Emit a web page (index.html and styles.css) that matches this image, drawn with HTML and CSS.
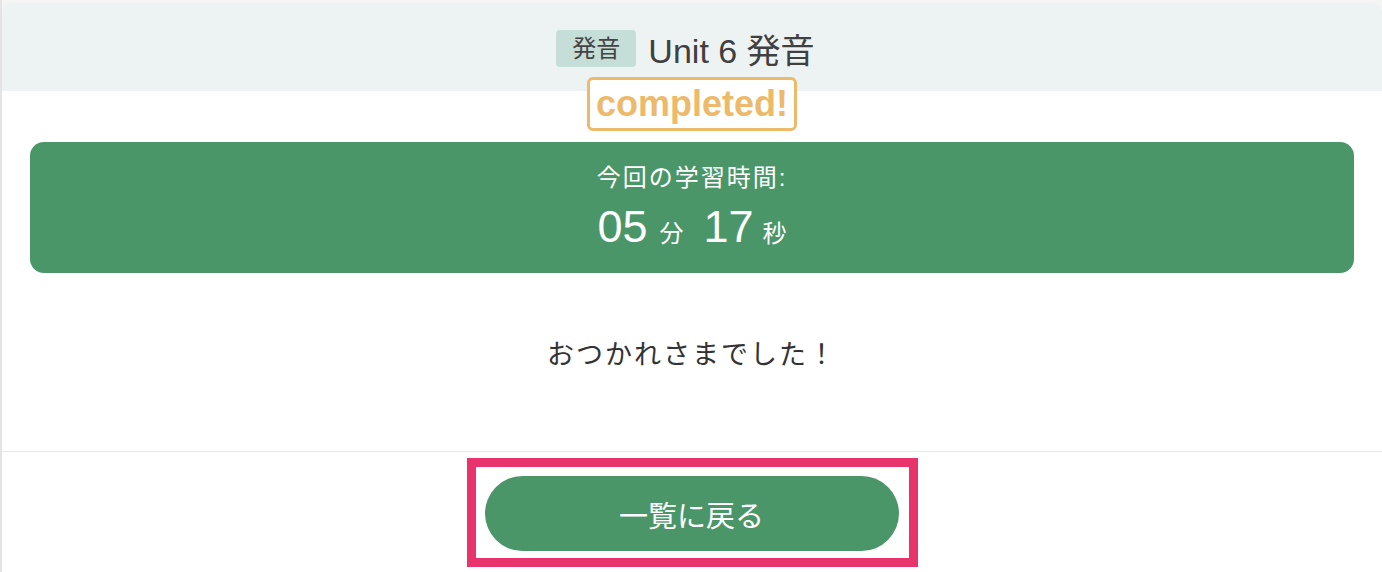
FILE: index.html
```html
<!DOCTYPE html>
<html lang="ja">
<head>
    <meta charset="UTF-8">
    <meta name="viewport" content="width=device-width, initial-scale=1.0">
    <title>Unit 6 発音 - completed</title>
    <link rel="stylesheet" href="styles.css">
</head>
<body>
    <div class="page">
        <div class="card">
            <div class="card-header">
                <span class="tag">発音</span>
                <h1 class="title">Unit 6 発音</h1>
            </div>

            <div class="card-body">
                <div class="completed">completed!</div>

                <div class="study-time">
                    <p class="study-label">今回の学習時間:</p>
                    <p class="study-value"><span class="num">05</span><span class="unit">分</span><span class="num">17</span><span class="unit">秒</span></p>
                </div>

                <p class="message">おつかれさまでした！</p>
            </div>

            <div class="card-footer">
                <div class="highlight">
                    <button type="button" class="back-button">一覧に戻る</button>
                </div>
            </div>
        </div>
    </div>
</body>
</html>
```

FILE: styles.css
```css
html, body {
    margin: 0;
    padding: 0;
    height: 100%;
}

body {
    background-color: #f4f4f4;
    font-family: "Liberation Sans", "Noto Sans CJK JP", sans-serif;
    color: #444;
}

.page {
    height: 100%;
    padding-top: 3px;
    border-left: 2px solid #e4e4e4;
    box-sizing: border-box;
    overflow: hidden;
}

.card {
    background-color: #fff;
    border-radius: 8px 8px 0 0;
    min-height: 569px;
}

.card-header {
    height: 88px;
    background-color: #edf3f3;
    border-radius: 8px 8px 0 0;
    display: flex;
    align-items: center;
    justify-content: center;
    gap: 12px;
    padding-right: 13px;
    box-sizing: border-box;
}

.tag {
    background-color: #c6ded8;
    color: #444;
    font-size: 24px;
    line-height: 37px;
    padding: 0 16px;
    border-radius: 4px;
    margin-top: 3px;
}

.title {
    margin: 0;
    font-size: 34px;
    font-weight: normal;
    color: #404040;
    margin-top: 3px;
}

.card-body {
    display: flex;
    flex-direction: column;
    align-items: center;
    height: 360px;
    border-bottom: 1px solid #e8e8e8;
}

.completed {
    margin-top: -14px;
    border: 3px solid #edb96b;
    border-radius: 6px;
    color: #edb96b;
    font-weight: bold;
    font-size: 36px;
    line-height: 48px;
    padding: 0 6px;
    background-color: #fff;
}

.study-time {
    align-self: stretch;
    margin: 11px 28px 0;
    height: 131px;
    background-color: #4b9669;
    border-radius: 14px;
    color: #fff;
    display: flex;
    flex-direction: column;
    align-items: center;
    padding-top: 21px;
    box-sizing: border-box;
}

.study-label {
    margin: 0;
    font-size: 24px;
    line-height: 30px;
    letter-spacing: 2px;
}

.study-value {
    margin: 9px 0 0;
    line-height: 50px;
}

.num {
    font-size: 45px;
}

.unit {
    font-size: 24px;
    margin-left: 12px;
    margin-right: 20px;
}

.unit:last-child {
    margin-right: 0;
    margin-left: 9px;
}

.message {
    margin: 65px 0 0;
    font-size: 27px;
    line-height: 34px;
    color: #333;
    letter-spacing: 2px;
}

.card-footer {
    display: flex;
    justify-content: center;
    padding-top: 6px;
}

.highlight {
    border: 9px solid #e8336d;
    padding: 9px 10px 7px 9px;
}

.back-button {
    display: block;
    width: 414px;
    height: 75px;
    border: none;
    border-radius: 38px;
    background-color: #4b9669;
    color: #fff;
    font-family: "Liberation Sans", "Noto Sans CJK JP", sans-serif;
    font-size: 29px;
    cursor: pointer;
}
```
